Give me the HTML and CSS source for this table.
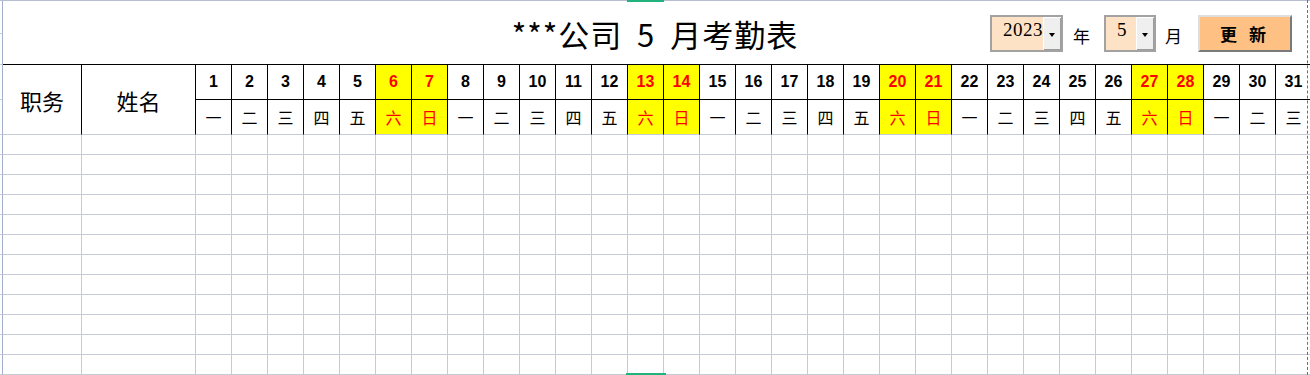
FILE: index.html
```html
<!DOCTYPE html>
<html lang="zh-CN">
<head>
<meta charset="utf-8">
<title>考勤表</title>
<link rel="stylesheet" href="styles.css">
</head>
<body>
<div class="sheet">
  <div class="rh"></div>
  <div class="title-cell">
    <div class="title">***公司 5 月考勤表</div>
    <div class="controls">
      <div class="combo combo-year"><span class="val">2023</span><span class="drop"><i class="arrow"></i></span></div>
      <span class="lbl lbl-year">年</span>
      <div class="combo combo-month"><span class="val">5</span><span class="drop"><i class="arrow"></i></span></div>
      <span class="lbl lbl-month">月</span>
      <button class="update">更 新</button>
    </div>
  </div>
  <div class="rh"></div>

  <div class="rh"></div>
  <div class="merged">职务</div>
  <div class="merged">姓名</div>
  <div class="hd">1</div><div class="hd">2</div><div class="hd">3</div><div class="hd">4</div><div class="hd">5</div><div class="hd we">6</div><div class="hd we">7</div>
  <div class="hd">8</div><div class="hd">9</div><div class="hd">10</div><div class="hd">11</div><div class="hd">12</div><div class="hd we">13</div><div class="hd we">14</div>
  <div class="hd">15</div><div class="hd">16</div><div class="hd">17</div><div class="hd">18</div><div class="hd">19</div><div class="hd we">20</div><div class="hd we">21</div>
  <div class="hd">22</div><div class="hd">23</div><div class="hd">24</div><div class="hd">25</div><div class="hd">26</div><div class="hd we">27</div><div class="hd we">28</div>
  <div class="hd">29</div><div class="hd">30</div><div class="hd">31</div>

  <div class="rh"></div>
  <div class="wd">一</div><div class="wd">二</div><div class="wd">三</div><div class="wd">四</div><div class="wd">五</div><div class="wd we">六</div><div class="wd we">日</div>
  <div class="wd">一</div><div class="wd">二</div><div class="wd">三</div><div class="wd">四</div><div class="wd">五</div><div class="wd we">六</div><div class="wd we">日</div>
  <div class="wd">一</div><div class="wd">二</div><div class="wd">三</div><div class="wd">四</div><div class="wd">五</div><div class="wd we">六</div><div class="wd we">日</div>
  <div class="wd">一</div><div class="wd">二</div><div class="wd">三</div><div class="wd">四</div><div class="wd">五</div><div class="wd we">六</div><div class="wd we">日</div>
  <div class="wd">一</div><div class="wd">二</div><div class="wd">三</div>

  <div class="rh"></div><div></div><div></div><div></div><div></div><div></div><div></div><div></div><div></div><div></div><div></div><div></div><div></div><div></div><div></div><div></div><div></div><div></div><div></div><div></div><div></div><div></div><div></div><div></div><div></div><div></div><div></div><div></div><div></div><div></div><div></div><div></div><div></div><div></div>
  <div class="rh"></div><div></div><div></div><div></div><div></div><div></div><div></div><div></div><div></div><div></div><div></div><div></div><div></div><div></div><div></div><div></div><div></div><div></div><div></div><div></div><div></div><div></div><div></div><div></div><div></div><div></div><div></div><div></div><div></div><div></div><div></div><div></div><div></div><div></div>
  <div class="rh"></div><div></div><div></div><div></div><div></div><div></div><div></div><div></div><div></div><div></div><div></div><div></div><div></div><div></div><div></div><div></div><div></div><div></div><div></div><div></div><div></div><div></div><div></div><div></div><div></div><div></div><div></div><div></div><div></div><div></div><div></div><div></div><div></div><div></div>
  <div class="rh"></div><div></div><div></div><div></div><div></div><div></div><div></div><div></div><div></div><div></div><div></div><div></div><div></div><div></div><div></div><div></div><div></div><div></div><div></div><div></div><div></div><div></div><div></div><div></div><div></div><div></div><div></div><div></div><div></div><div></div><div></div><div></div><div></div><div></div>
  <div class="rh"></div><div></div><div></div><div></div><div></div><div></div><div></div><div></div><div></div><div></div><div></div><div></div><div></div><div></div><div></div><div></div><div></div><div></div><div></div><div></div><div></div><div></div><div></div><div></div><div></div><div></div><div></div><div></div><div></div><div></div><div></div><div></div><div></div><div></div>
  <div class="rh"></div><div></div><div></div><div></div><div></div><div></div><div></div><div></div><div></div><div></div><div></div><div></div><div></div><div></div><div></div><div></div><div></div><div></div><div></div><div></div><div></div><div></div><div></div><div></div><div></div><div></div><div></div><div></div><div></div><div></div><div></div><div></div><div></div><div></div>
  <div class="rh"></div><div></div><div></div><div></div><div></div><div></div><div></div><div></div><div></div><div></div><div></div><div></div><div></div><div></div><div></div><div></div><div></div><div></div><div></div><div></div><div></div><div></div><div></div><div></div><div></div><div></div><div></div><div></div><div></div><div></div><div></div><div></div><div></div><div></div>
  <div class="rh"></div><div></div><div></div><div></div><div></div><div></div><div></div><div></div><div></div><div></div><div></div><div></div><div></div><div></div><div></div><div></div><div></div><div></div><div></div><div></div><div></div><div></div><div></div><div></div><div></div><div></div><div></div><div></div><div></div><div></div><div></div><div></div><div></div><div></div>
  <div class="rh"></div><div></div><div></div><div></div><div></div><div></div><div></div><div></div><div></div><div></div><div></div><div></div><div></div><div></div><div></div><div></div><div></div><div></div><div></div><div></div><div></div><div></div><div></div><div></div><div></div><div></div><div></div><div></div><div></div><div></div><div></div><div></div><div></div><div></div>
  <div class="rh"></div><div></div><div></div><div></div><div></div><div></div><div></div><div></div><div></div><div></div><div></div><div></div><div></div><div></div><div></div><div></div><div></div><div></div><div></div><div></div><div></div><div></div><div></div><div></div><div></div><div></div><div></div><div></div><div></div><div></div><div></div><div></div><div></div><div></div>
  <div class="rh"></div><div></div><div></div><div></div><div></div><div></div><div></div><div></div><div></div><div></div><div></div><div></div><div></div><div></div><div></div><div></div><div></div><div></div><div></div><div></div><div></div><div></div><div></div><div></div><div></div><div></div><div></div><div></div><div></div><div></div><div></div><div></div><div></div><div></div>
  <div class="rh"></div><div></div><div></div><div></div><div></div><div></div><div></div><div></div><div></div><div></div><div></div><div></div><div></div><div></div><div></div><div></div><div></div><div></div><div></div><div></div><div></div><div></div><div></div><div></div><div></div><div></div><div></div><div></div><div></div><div></div><div></div><div></div><div></div><div></div>

  <span class="pagebreak"></span>
  <span class="mark mark-top"></span>
  <span class="mark mark-bottom"></span>
</div>
</body>
</html>
```

FILE: styles.css
```css
html, body {
  margin: 0;
  padding: 0;
  overflow: hidden;
  background: #fff;
}

body {
  font-family: "Noto Sans CJK SC", "Liberation Sans", sans-serif;
  color: #000;
}

.sheet {
  position: relative;
  display: grid;
  grid-template-columns: 3px 79px 114px repeat(31, 36px);
  grid-template-rows: 33px 31px 35px 35px repeat(12, 20px);
  width: 1312px;
  border-top: 1px solid #b6bed1;
}

.sheet > div {
  box-sizing: border-box;
  border-right: 1px solid #c6cbd8;
  border-bottom: 1px solid #c6cbd8;
}

.sheet > .rh {
  border-right: 1px solid #a3afcc;
}

/* title row */
.sheet > .title-cell {
  grid-column: 2 / -1;
  grid-row: span 2;
  border-right: none;
  border-bottom: 1px solid #000;
  display: grid;
  grid-template-columns: 1fr auto 1fr;
  align-items: start;
  padding-right: 5px;
}

.title {
  grid-column: 2;
  margin-top: 17px;
  font-size: 31px;
  line-height: 31px;
  letter-spacing: 1px;
  word-spacing: 7px;
  white-space: nowrap;
}

.controls {
  grid-column: 3;
  justify-self: end;
  margin-top: 14px;
  margin-right: 15px;
  display: flex;
  align-items: center;
}

.combo {
  box-sizing: border-box;
  display: flex;
  height: 37px;
  border: 2px solid #a2a2a2;
  background: #fde2c6;
}

.combo-year { width: 73px; }
.combo-month { width: 52px; }

.val {
  flex: 1;
  padding: 3px 0 0 11px;
  font-family: "Liberation Serif", serif;
  font-size: 19px;
  line-height: 19px;
  letter-spacing: 0.5px;
}

.drop {
  width: 18px;
  display: flex;
  align-items: center;
  justify-content: center;
  background: #efefef;
  box-shadow: inset 1px 1px #ffffff, inset -1px -1px #9c9c9c;
}

.arrow {
  width: 0;
  height: 0;
  margin-top: 3px;
  border-left: 3px solid transparent;
  border-right: 3px solid transparent;
  border-top: 4px solid #000;
}

.lbl {
  font-size: 17px;
  line-height: 17px;
  margin-top: 3px;
}

.lbl-year { margin-left: 10px; margin-right: 14px; }
.lbl-month { margin-left: 9px; margin-right: 16px; }

.update {
  box-sizing: border-box;
  width: 94px;
  height: 37px;
  padding: 0 4px 0 0;
  background: #ffc183;
  border: 2px solid;
  border-color: #dedede #7a7a7a #7a7a7a #dedede;
  font-family: "Noto Sans CJK SC", sans-serif;
  font-size: 17px;
  font-weight: bold;
  word-spacing: 8px;
  color: #000;
}

/* header rows */
.sheet > .merged {
  grid-row: span 2;
  border-right: 1px solid #000;
  display: flex;
  align-items: center;
  justify-content: center;
  font-size: 22px;
}

.sheet > .hd {
  border-right: 1px solid #000;
  border-bottom: 1px solid #000;
  display: flex;
  align-items: center;
  justify-content: center;
  font-family: "Liberation Sans", Arial, sans-serif;
  font-weight: bold;
  font-size: 16px;
}

.sheet > .wd {
  border-right: 1px solid #000;
  display: flex;
  align-items: center;
  justify-content: center;
  font-size: 16px;
}

.sheet > .we {
  background: #ffff00;
  color: #ff0000;
}

/* overlays */
.pagebreak {
  position: absolute;
  left: 1307px;
  top: -1px;
  bottom: 0;
  border-left: 1px dashed #6e6e6e;
}

.mark {
  position: absolute;
  height: 2px;
  background: #22b27b;
}

.mark-top {
  left: 627px;
  top: -1px;
  width: 37px;
}

.mark-bottom {
  left: 626px;
  bottom: 0;
  width: 40px;
}
```
